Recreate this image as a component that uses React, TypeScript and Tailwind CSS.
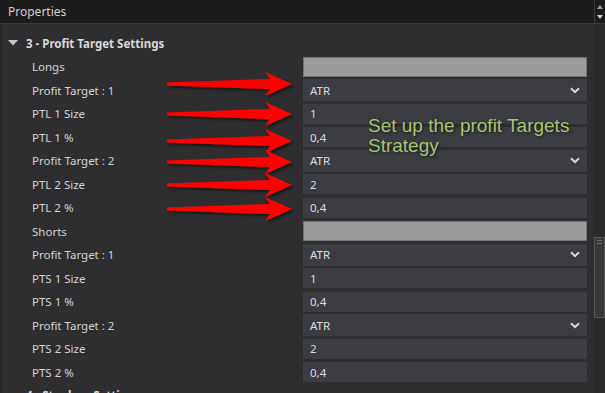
import React from "react";

type Row = { label: string; kind: "gray" | "combo" | "text"; value?: string };

const rows: Row[] = [
  { label: "Longs", kind: "gray" },
  { label: "Profit Target : 1", kind: "combo", value: "ATR" },
  { label: "PTL 1 Size", kind: "text", value: "1" },
  { label: "PTL 1 %", kind: "text", value: "0,4" },
  { label: "Profit Target : 2", kind: "combo", value: "ATR" },
  { label: "PTL 2 Size", kind: "text", value: "2" },
  { label: "PTL 2 %", kind: "text", value: "0,4" },
  { label: "Shorts", kind: "gray" },
  { label: "Profit Target : 1", kind: "combo", value: "ATR" },
  { label: "PTS 1 Size", kind: "text", value: "1" },
  { label: "PTS 1 %", kind: "text", value: "0,4" },
  { label: "Profit Target : 2", kind: "combo", value: "ATR" },
  { label: "PTS 2 Size", kind: "text", value: "2" },
  { label: "PTS 2 %", kind: "text", value: "0,4" },
];

// arrow y positions (tip), all drawn from x=167 to x=292
const arrowYs = [84, 114, 141, 162, 185, 209];

const Chevron = () => (
  <svg width="10" height="7" viewBox="0 0 10 7" className="shrink-0">
    <path d="M1 1.2 L5 5.2 L9 1.2" fill="none" stroke="#d6d6d6" strokeWidth="2" />
  </svg>
);

const Caret = () => (
  <svg width="10" height="6" viewBox="0 0 10 6">
    <path d="M0 0 H10 L5 5.5 Z" fill="#c4c4c4" />
  </svg>
);

const PropRow = ({ row }: { row: Row }) => (
  <div className="flex h-[23.5px] items-center">
    <div className="w-[296px] h-full flex items-center pl-[30px] border-r border-[#29292b] text-[11.5px] text-[#d2d2d2]">
      {row.label}
    </div>
    <div className="flex-1 h-full flex items-center pl-[5px] pr-[7px]">
      {row.kind === "gray" && (
        <div className="w-full h-[20px] bg-[#9c9c9c] border border-[#727272]" />
      )}
      {row.kind === "combo" && (
        <div className="w-full h-[22px] bg-[#3c3c43] flex items-center justify-between pl-[7px] pr-[7px] text-[11.5px] text-[#dcdcdc]">
          <span>{row.value}</span>
          <Chevron />
        </div>
      )}
      {row.kind === "text" && (
        <div className="w-full h-[20px] bg-[#3c3c43] flex items-center pl-[7px] text-[11.5px] text-[#dcdcdc]">
          {row.value}
        </div>
      )}
    </div>
  </div>
);

export default function App() {
  return (
    <div
      className="relative w-[605px] h-[393px] overflow-hidden bg-[#2e2e31]"
      style={{ fontFamily: '"Noto Sans", "Open Sans", sans-serif' }}
    >
      {/* title bar */}
      <div className="flex h-[24px] bg-[#1c1c1d] border-b border-[#3a3a3c]">
        <div className="flex-1 flex items-center pl-[8px] text-[12px] text-[#cfcfcf]">Properties</div>
        <div className="w-[11px] border-l border-[#3a3a3c] flex flex-col items-center justify-center gap-[6px]">
          <svg width="6" height="4" viewBox="0 0 6 4">
            <path d="M0 4 L3 0 L6 4 Z" fill="#9a9a9a" />
          </svg>
          <svg width="6" height="4" viewBox="0 0 6 4">
            <path d="M0 0 L6 0 L3 4 Z" fill="#d0d0d0" />
          </svg>
        </div>
      </div>

      {/* grid body */}
      <div className="flex h-[369px] border-l-2 border-[#262628]">
        <div className="flex-1 pt-[7.5px]">
          <div className="flex h-[23.5px] items-center pl-[6px] gap-[8px]">
            <Caret />
            <span className="text-[11.5px] font-bold text-[#d8d8d8]">3 - Profit Target Settings</span>
          </div>
          {rows.map((r, i) => (
            <PropRow key={i} row={r} />
          ))}
          <div className="flex h-[23.5px] items-center pl-[6px] gap-[8px]">
            <Caret />
            <span className="text-[11.5px] font-bold text-[#d8d8d8]">4 - Stoploss Settings</span>
          </div>
        </div>
        {/* scrollbar */}
        <div className="w-[11px] bg-[#2b2b2e]">
          <div className="mt-[213px] h-[81px] bg-[#38383b] border border-[#565659] flex flex-col gap-[2px] pt-[2px] px-[2px]">
            <div className="h-px bg-[#6a6a6d]" />
            <div className="h-px bg-[#6a6a6d]" />
          </div>
        </div>
      </div>

      {/* annotation arrows */}
      <svg className="absolute left-0 top-0 pointer-events-none" width="605" height="393">
        <defs>
          <filter id="sh" x="-10%" y="-50%" width="130%" height="200%">
            <feDropShadow dx="2" dy="2" stdDeviation="1.5" floodColor="#000" floodOpacity="0.55" />
          </filter>
        </defs>
        {arrowYs.map((y) => (
          <polygon
            key={y}
            filter="url(#sh)"
            fill="#ff0000"
            transform={`translate(167 ${y})`}
            points="0,-1.5 103,-5 98,-12 125,0 98,12 103,5 0,1.5"
          />
        ))}
      </svg>

      {/* annotation text */}
      <div
        className="absolute left-[368px] top-[116px] text-[19px] leading-[20px] text-[#a4c56f]"
        style={{ fontFamily: '"Liberation Sans", Arial, sans-serif', textShadow: "1px 1px 3px rgba(0,0,0,0.6)" }}
      >
        Set up the profit Targets
        <br />
        Strategy
      </div>
    </div>
  );
}
